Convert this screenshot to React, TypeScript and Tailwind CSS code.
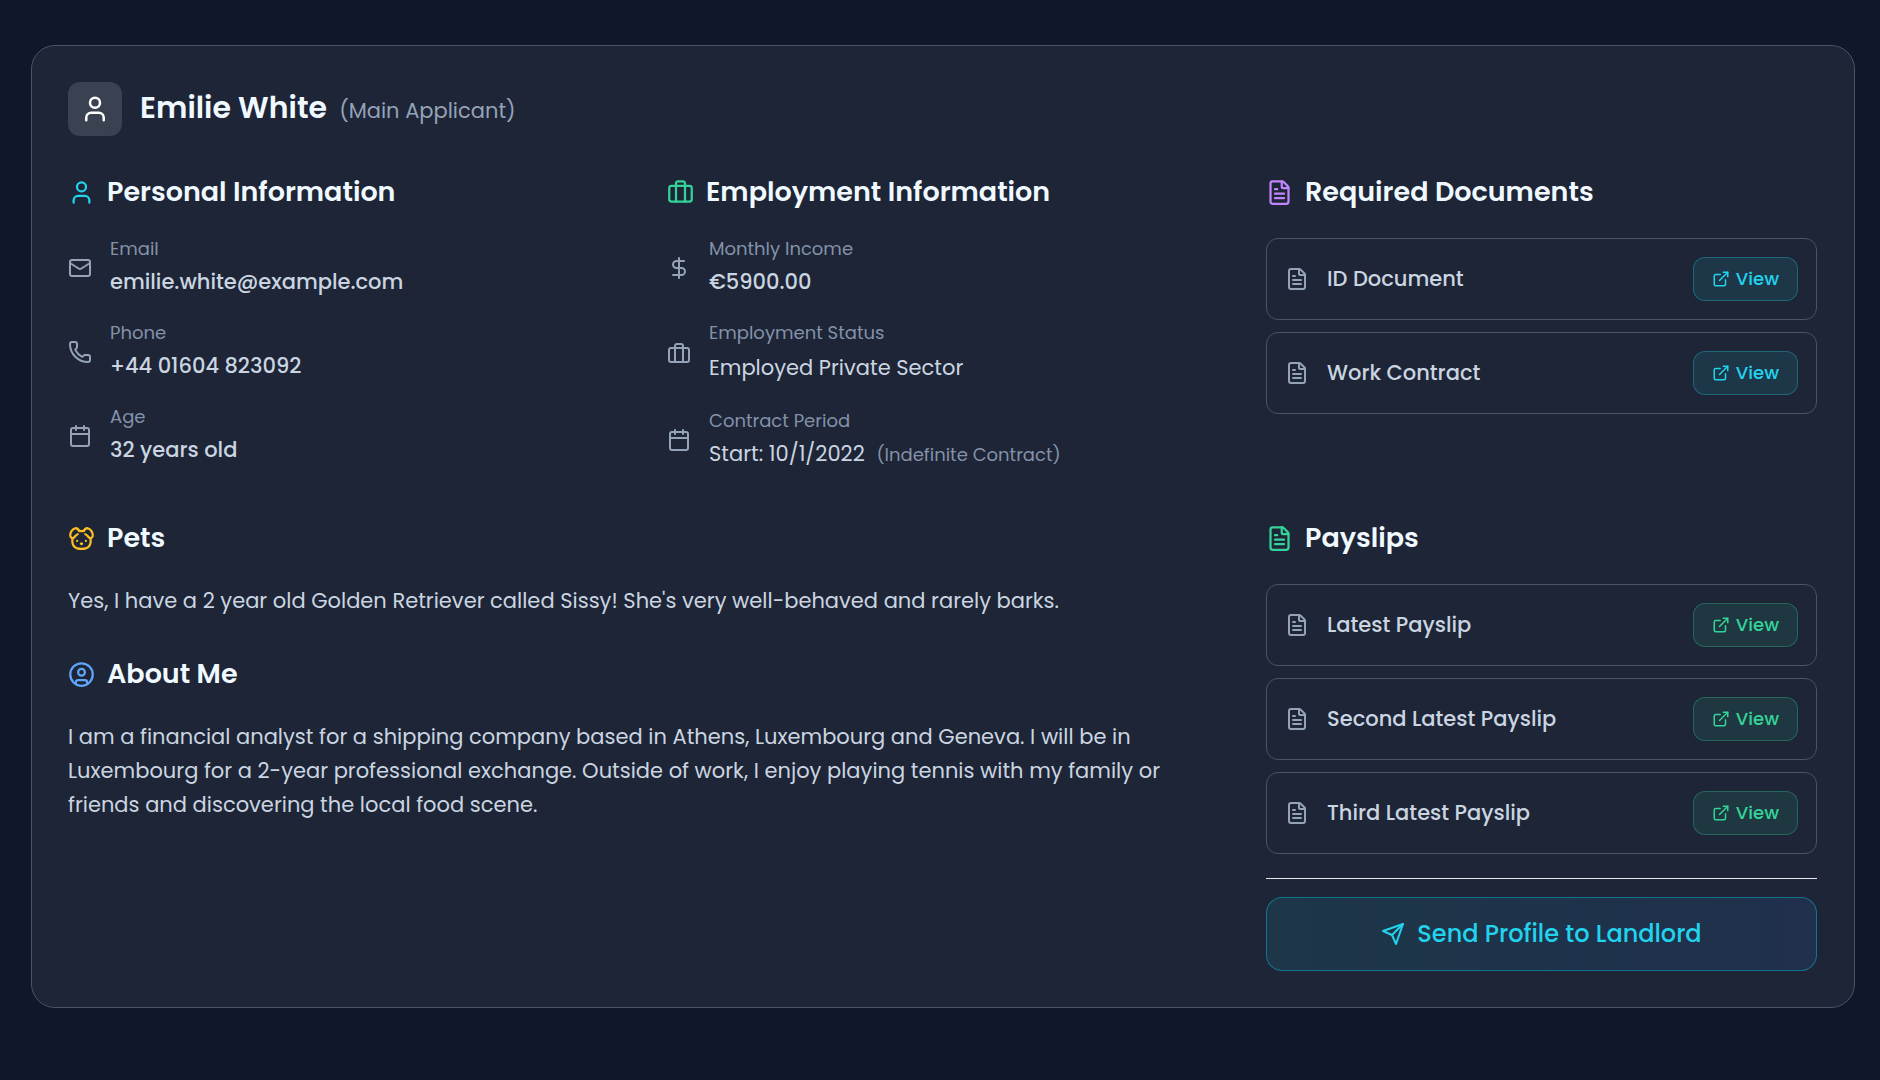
import type { ReactNode } from 'react';
import {
  Briefcase,
  Calendar,
  CircleUser,
  DollarSign,
  ExternalLink,
  FileText,
  Mail,
  Phone,
  User,
  type LucideIcon,
} from 'lucide-react';

function DogFace({ className }: { className?: string }) {
  return (
    <svg viewBox="0 0 24 24" fill="none" stroke="currentColor" strokeWidth="2" strokeLinecap="round" strokeLinejoin="round" className={className} aria-hidden="true">
      <path d="M10 5.300q2 .3 4 0" />
      <path d="M10 5.300C9.200 3.600 7.800 2.800 6.400 2.900 4 3.100 1.900 6.800 2 9.300c.1 1.900 1.400 2.700 2.800 2.200C6.400 10.800 6.500 8.900 8.600 8.200" />
      <path d="M14 5.300c.8-1.700 2.200-2.500 3.600-2.400 2.400.2 4.500 3.900 4.400 6.400-.1 1.900-1.400 2.700-2.800 2.200-1.600-.7-1.700-2.600-3.800-3.300" />
      <path d="M4 11.800C3.200 18 5.500 21.200 12 21.200S20.800 18 20 11.800" />
      <path d="M8.100 14.200h.01M15.900 14.200h.01M11.500 16.500h1l-.5.500z" />
    </svg>
  );
}

function PaperPlane({ className }: { className?: string }) {
  return (
    <svg viewBox="0 0 24 24" fill="none" stroke="currentColor" strokeWidth="2" strokeLinecap="round" strokeLinejoin="round" className={className} aria-hidden="true">
      <path d="m22 2-7 20-4-9-9-4Z" />
      <path d="M22 2 11 13" />
    </svg>
  );
}

function SectionTitle({ icon, children }: { icon: ReactNode; children: ReactNode }) {
  return (
    <h2 className="mb-[26px] flex items-center gap-3 text-[27px] leading-10 font-semibold text-[#f0f9ff]">
      {icon}
      {children}
    </h2>
  );
}

function Field({ icon: Icon, label, children }: { icon: LucideIcon; label: string; children: ReactNode }) {
  return (
    <div className="flex items-center gap-[18px]">
      <Icon className="size-6 shrink-0 text-[#94a3b8]" />
      <dl>
        <dt className="text-lg leading-[22px] text-[#8492a9]">{label}</dt>
        <dd className="mt-1.5 text-[21px] leading-8 font-medium text-[#cbd5e1]">{children}</dd>
      </dl>
    </div>
  );
}

function DocumentRow({ name, tone }: { name: string; tone: 'cyan' | 'green' }) {
  const toneClass =
    tone === 'cyan'
      ? 'border-[#22d3ee]/30 bg-[#22d3ee]/10 text-[#22d3ee]'
      : 'border-[#34d399]/30 bg-[#34d399]/10 text-[#34d399]';
  return (
    <li className="flex items-center justify-between rounded-xl border border-[#475569] p-[18px]">
      <span className="flex items-center gap-[18px] text-[21px] leading-8 font-medium text-[#cbd5e1]">
        <FileText className="size-6 shrink-0 text-[#94a3b8]" />
        {name}
      </span>
      <a href="#" className={`flex h-11 items-center gap-1.5 rounded-xl border px-[18px] text-lg font-medium ${toneClass}`}>
        <ExternalLink className="size-[18px]" />
        View
      </a>
    </li>
  );
}

export default function App() {
  return (
    <main className="min-h-screen bg-[#0f172a] py-[45px] pr-[25px] pl-[31px] font-['Poppins','Inter',sans-serif]">
      <article className="rounded-3xl border border-[#475569] bg-[#1d2536] py-9 pr-[37px] pl-9">
        <header className="mb-9 flex items-center gap-[18px]">
          <div className="flex size-[54px] items-center justify-center rounded-xl bg-[#3a4252] text-white">
            <User className="size-[30px]" />
          </div>
          <h1 className="flex items-baseline gap-3 text-[30px] leading-10 font-semibold text-[#f0f9ff]">
            Emilie White
            <span className="text-[21px] font-normal text-[#94a3b8]">(Main Applicant)</span>
          </h1>
        </header>

        <div className="grid grid-cols-3 gap-12">
          <section>
            <SectionTitle icon={<User className="size-[27px] text-[#22d3ee]" />}>Personal Information</SectionTitle>
            <div className="flex flex-col gap-6">
              <Field icon={Mail} label="Email">emilie.white@example.com</Field>
              <Field icon={Phone} label="Phone">+44 01604 823092</Field>
              <Field icon={Calendar} label="Age">32 years old</Field>
            </div>
          </section>

          <section>
            <SectionTitle icon={<Briefcase className="size-[27px] text-[#34d399]" />}>Employment Information</SectionTitle>
            <div className="flex flex-col gap-6">
              <Field icon={DollarSign} label="Monthly Income">€5900.00</Field>
              <Field icon={Briefcase} label="Employment Status">
                <span className="block leading-9 font-normal">Employed Private Sector</span>
              </Field>
              <Field icon={Calendar} label="Contract Period">
                <span className="font-normal">
                  Start: 10/1/2022 <span className="ml-1.5 text-lg leading-none text-[#8492a9]">(Indefinite Contract)</span>
                </span>
              </Field>
            </div>
          </section>

          <section>
            <SectionTitle icon={<FileText className="size-[27px] text-[#c084fc]" />}>Required Documents</SectionTitle>
            <ul className="flex flex-col gap-3">
              <DocumentRow name="ID Document" tone="cyan" />
              <DocumentRow name="Work Contract" tone="cyan" />
            </ul>
          </section>

          <div className="col-span-2 flex flex-col gap-9">
            <section>
              <SectionTitle icon={<DogFace className="size-[27px] text-[#fbbf24]" />}>Pets</SectionTitle>
              <p className="text-[21px] leading-[34px] text-[#cbd5e1]">
                Yes, I have a 2 year old Golden Retriever called Sissy! She's very well-behaved and rarely barks.
              </p>
            </section>
            <section>
              <SectionTitle icon={<CircleUser className="size-[27px] text-[#60a5fa]" />}>About Me</SectionTitle>
              <p className="text-[21px] leading-[34px] text-[#cbd5e1]">
                I am a financial analyst for a shipping company based in Athens, Luxembourg and Geneva. I will be in
                Luxembourg for a 2-year professional exchange. Outside of work, I enjoy playing tennis with my family or
                friends and discovering the local food scene.
              </p>
            </section>
          </div>

          <section>
            <SectionTitle icon={<FileText className="size-[27px] text-[#34d399]" />}>Payslips</SectionTitle>
            <ul className="flex flex-col gap-3">
              <DocumentRow name="Latest Payslip" tone="green" />
              <DocumentRow name="Second Latest Payslip" tone="green" />
              <DocumentRow name="Third Latest Payslip" tone="green" />
            </ul>
            <div className="mt-6 border-t border-[#e5e7eb] pt-[18px]">
              <button type="button" className="flex h-[74px] w-full items-center justify-center gap-3 rounded-2xl border border-[#06b6d4]/50 bg-linear-to-r from-[#22d3ee]/10 to-[#3b82f6]/12 text-2xl font-medium text-[#22d3ee]">
                <PaperPlane className="size-6" />
                Send Profile to Landlord
              </button>
            </div>
          </section>
        </div>
      </article>
    </main>
  );
}
